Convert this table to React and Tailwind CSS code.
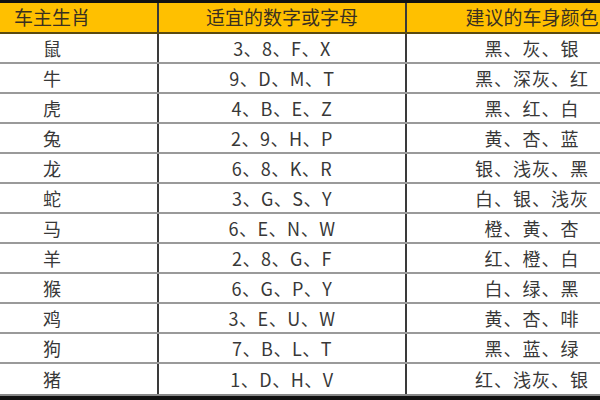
const ROWS = [
  ["鼠", "3、8、F、X", "黑、灰、银"],
  ["牛", "9、D、M、T", "黑、深灰、红"],
  ["虎", "4、B、E、Z", "黑、红、白"],
  ["兔", "2、9、H、P", "黄、杏、蓝"],
  ["龙", "6、8、K、R", "银、浅灰、黑"],
  ["蛇", "3、G、S、Y", "白、银、浅灰"],
  ["马", "6、E、N、W", "橙、黄、杏"],
  ["羊", "2、8、G、F", "红、橙、白"],
  ["猴", "6、G、P、Y", "白、绿、黑"],
  ["鸡", "3、E、U、W", "黄、杏、啡"],
  ["狗", "7、B、L、T", "黑、蓝、绿"],
  ["猪", "1、D、H、V", "红、浅灰、银"],
];

export default function App() {
  return (
    <div
      className="w-[600px] h-[400px] overflow-hidden bg-white"
      style={{ fontFamily: '"Noto Sans CJK SC", "Liberation Sans", sans-serif' }}
    >
      <div className="h-[3px] bg-[#111]" />
      <div className="w-[710px] -ml-[53px]">
        <div className="flex h-[31px] bg-[#ffc000] border-b-2 border-[#5a4a10] text-[19px] text-[#3a3020]">
          <div className="w-[210px] flex items-center justify-center">车主生肖</div>
          <div className="w-[248px] flex items-center justify-center border-l-2 border-[#3a3a3a]">适宜的数字或字母</div>
          <div className="w-[252px] flex items-center justify-center border-l-2 border-[#3a3a3a]">建议的车身颜色</div>
        </div>
        {ROWS.map((r, i) => (
          <div
            key={i}
            className={`flex h-[30px] text-[18px] text-[#383838] ${i < ROWS.length - 1 ? "border-b-2 border-[#9a9a9a]" : ""}`}
          >
            <div className="w-[210px] flex items-center justify-center">{r[0]}</div>
            <div className="w-[248px] flex items-center justify-center border-l-2 border-[#3a3a3a] tracking-[0.5px]">{r[1]}</div>
            <div className="w-[252px] flex items-center justify-center border-l-2 border-[#3a3a3a] tracking-[1px]">{r[2]}</div>
          </div>
        ))}
      </div>
      <div className="h-[2px] bg-[#888]" />
      <div className="h-[10px] bg-[#111]" />
    </div>
  );
}
